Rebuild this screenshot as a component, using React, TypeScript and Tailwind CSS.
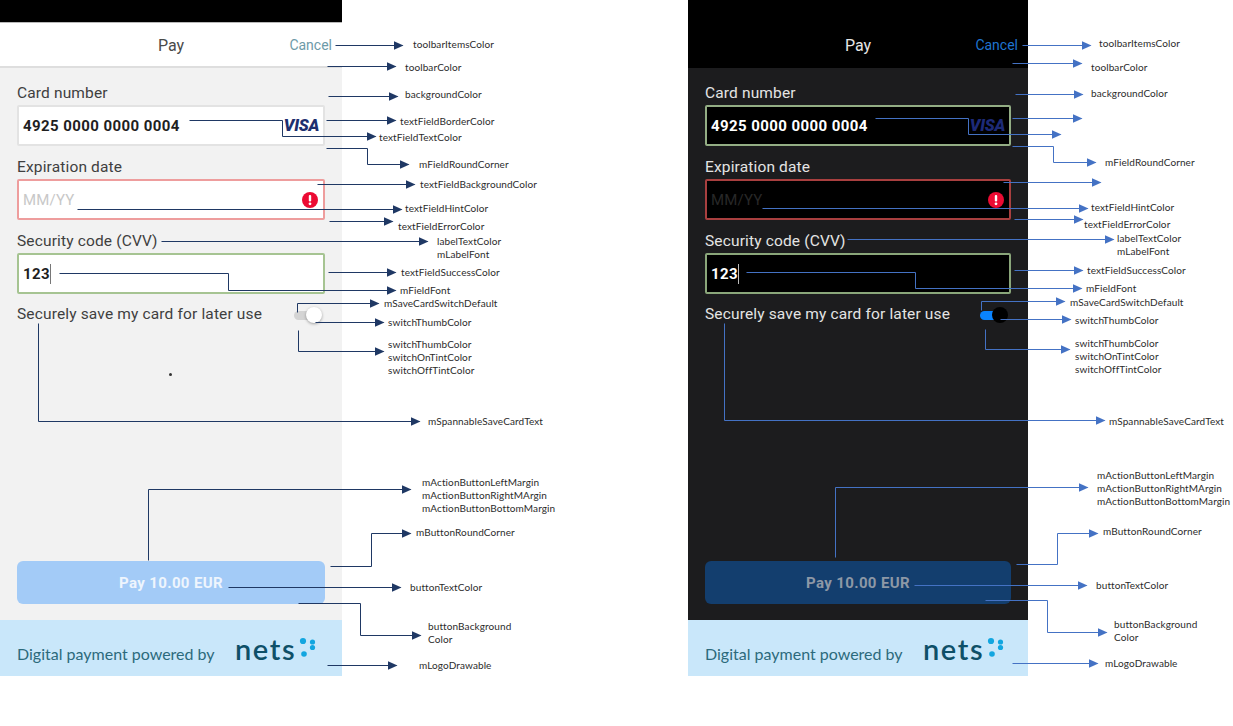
const light = {
  panel: 'w-[342px] bg-[#f2f2f2]',
  topBar: 'h-[23px] bg-black border-b border-[#b9b9b9]',
  header: 'h-[45px] bg-white border-b-2 border-[#dedede]',
  title: 'text-[#4a4a4a]',
  cancel: 'text-[#6d9aa8]',
  label: 'text-[#3f3f3f]',
  value: 'text-[#1f1f1f]',
  hint: 'text-[#c8c8c8]',
  field: 'bg-white',
  plain: 'border-[#e3e3e3]',
  error: 'border-[#ee9d9d]',
  success: 'border-[#a6c492]',
  caret: 'bg-[#777777]',
  visa: 'text-[#1d2f6f]',
  track: 'bg-[#d4d4d4]',
  thumb: 'bg-white shadow-[0_1px_3px_rgba(0,0,0,0.35)]',
  button: 'bg-[#a3cbf7]',
  buttonText: 'text-[#eef5fd]',
}

const dark = {
  panel: 'w-[340px] bg-[#1c1c1e]',
  topBar: 'h-[23px] bg-black',
  header: 'h-[45px] bg-black border-b-2 border-black',
  title: 'text-[#e6e6e6]',
  cancel: 'text-[#1f74d0]',
  label: 'text-[#e4e4e4]',
  value: 'text-white',
  hint: 'text-[#282828]',
  field: 'bg-black',
  plain: 'border-[#93ad84]',
  error: 'border-[#a83f3f]',
  success: 'border-[#8aa67a]',
  caret: 'bg-[#bbbbbb]',
  visa: 'text-[#1d2a78]',
  track: 'bg-[#0a84ff]',
  thumb: 'bg-black',
  button: 'bg-[#133e6e]',
  buttonText: 'text-[#8d98a6]',
}

type Theme = typeof light

const Field = ({ theme, label, border, children }: { theme: Theme; label: string; border: string; children: React.ReactNode }) => (
  <div>
    <div className={`h-5 text-[15.5px] leading-[20px] tracking-[0.15px] ${theme.label}`}>{label}</div>
    <div className={`mt-[2px] h-[41px] flex items-center justify-between pl-[4px] pr-[4px] border-2 rounded-[2px] ${theme.field} ${border}`}>
      {children}
    </div>
  </div>
)

const PayPanel = ({ theme, dot }: { theme: Theme; dot?: boolean }) => (
  <div className={`relative h-[676px] flex flex-col font-['Roboto',sans-serif] ${theme.panel}`}>
    <div className={theme.topBar} />
    <div className={`relative flex items-center justify-center pt-[2px] ${theme.header}`}>
      <span className={`text-[16px] ${theme.title}`}>Pay</span>
      <span className={`absolute right-[10px] text-[14px] ${theme.cancel}`}>Cancel</span>
    </div>
    <div className="flex-1 flex flex-col px-[17px] pt-[15px] pb-[16px]">
      <div className="flex flex-col gap-[11px]">
        <Field theme={theme} label="Card number" border={theme.plain}>
          <span className={`mt-[2px] text-[15px] font-bold tracking-[0.42px] ${theme.value}`}>4925 0000 0000 0004</span>
          <span className={`mt-[1px] text-[16.5px] font-black italic tracking-[-0.3px] ${theme.visa}`}>VISA</span>
        </Field>
        <Field theme={theme} label="Expiration date" border={theme.error}>
          <span className={`mt-[2px] text-[15px] tracking-[0.2px] ${theme.hint}`}>MM/YY</span>
          <svg width="16" height="16" viewBox="0 0 16 16" className="mr-[1px]">
            <circle cx="8" cy="8" r="8" fill="#ec0b33" />
            <rect x="6.8" y="3" width="2.4" height="6.4" rx="1" fill="#fff" />
            <circle cx="8" cy="11.8" r="1.4" fill="#fff" />
          </svg>
        </Field>
        <Field theme={theme} label="Security code (CVV)" border={theme.success}>
          <span className="flex items-center">
            <span className={`mt-[2px] text-[15px] font-bold tracking-[0.42px] ${theme.value}`}>123</span>
            <span className={`w-px h-[20px] ${theme.caret}`} />
          </span>
        </Field>
      </div>
      <div className="mt-[10px] h-5 flex items-center justify-between">
        <span className={`text-[15.5px] leading-[22px] tracking-[0.15px] ${theme.label}`}>Securely save my card for later use</span>
        <div className="relative mt-[1px] mr-[3px] w-[28px] h-[16px]">
          <div className={`absolute left-0 top-[4px] w-[20px] h-[9px] rounded-full ${theme.track}`} />
          <div className={`absolute left-[12px] top-0 w-[16px] h-[16px] rounded-full ${theme.thumb}`} />
        </div>
      </div>
      {dot && <div className="absolute left-[169px] top-[373px] w-[3px] h-[3px] rounded-full bg-[#333333]" />}
      <div className={`mt-auto h-[43px] rounded-[6px] flex items-center justify-center ${theme.button}`}>
        <span className={`mt-[2px] text-[15px] font-bold tracking-[0.35px] ${theme.buttonText}`}>Pay 10.00 EUR</span>
      </div>
    </div>
    <div className="h-[56px] bg-[#c9e7fa] flex items-center pl-[17px]">
      <span className="w-[218px] mt-[12px] text-[16px] text-[#2c6a7c] font-['Lato',sans-serif]">Digital payment powered by</span>
      <span className="mt-[1px] text-[29px] leading-none font-semibold tracking-[1.6px] text-[#0e5068] font-['Lato',sans-serif]">nets</span>
      <svg width="20" height="22" viewBox="0 0 20 22" className="ml-[2px] -mt-[2px]">
        <circle cx="5" cy="5" r="3.1" fill="#12a6e0" />
        <circle cx="14.5" cy="6" r="2.6" fill="#12a6e0" />
        <circle cx="14.5" cy="11.5" r="2.6" fill="#12a6e0" />
        <circle cx="6" cy="18" r="2.8" fill="#12a6e0" />
      </svg>
    </div>
  </div>
)

// connector lines of the two legends, page coordinates
const leftLines = [
  '335,45 402,45', '327,66 395,66', '328,96 397,96', '326,120 395,120',
  '189,120 282,120 282,136 375,136', '326,148 367,148 367,164 408,164',
  '317,184 414,184', '77,209 401,209', '329,221 392,221', '161,241 427,241',
  '328,272 395,272', '59,273 228,273 228,290 395,290', '297,312 297,303 378,303',
  '315,322 383,322', '298,330 298,351 383,351', '38,323 38,421 419,421',
  '148,560 148,489 410,489', '330,566 371,566 371,533 410,533', '228,587 400,587',
  '298,603 360,603 360,635 420,635', '327,665 396,665',
]

const rightLines = [
  '1022,45 1090,45', '1012,63 1081,63', '1015,94 1082,94', '1012,118 1081,118',
  '875,118 968,118 968,134 1060,134', '1012,146 1053,146 1053,162 1095,162',
  '1003,182 1100,182', '762,208 1087,208', '1014,219 1082,219', '847,239 1113,239',
  '1014,270 1082,270', '746,272 915,272 915,288 1081,288', '981,310 981,301 1064,301',
  '1000,319 1070,319', '985,329 985,349 1069,349', '724,323 724,420 1104,420',
  '835,557 835,487 1087,487', '1016,564 1057,564 1057,533 1097,533', '914,585 1086,585',
  '985,600 1047,600 1047,632 1106,632', '1012,663 1097,663',
]

const labels = [
  { at: 'left-[413px] top-[37px]', text: 'toolbarItemsColor' },
  { at: 'left-[405px] top-[60px]', text: 'toolbarColor' },
  { at: 'left-[405px] top-[87px]', text: 'backgroundColor' },
  { at: 'left-[400px] top-[114px]', text: 'textFieldBorderColor' },
  { at: 'left-[379px] top-[130px]', text: 'textFieldTextColor' },
  { at: 'left-[419px] top-[157px]', text: 'mFieldRoundCorner' },
  { at: 'left-[420px] top-[177px]', text: 'textFieldBackgroundColor' },
  { at: 'left-[405px] top-[201px]', text: 'textFieldHintColor' },
  { at: 'left-[398px] top-[219px]', text: 'textFieldErrorColor' },
  { at: 'left-[437px] top-[234px]', text: 'labelTextColor' },
  { at: 'left-[437px] top-[247px]', text: 'mLabelFont' },
  { at: 'left-[401px] top-[265px]', text: 'textFieldSuccessColor' },
  { at: 'left-[400px] top-[283px]', text: 'mFieldFont' },
  { at: 'left-[384px] top-[296px]', text: 'mSaveCardSwitchDefault' },
  { at: 'left-[388px] top-[315px]', text: 'switchThumbColor' },
  { at: 'left-[388px] top-[337px]', text: 'switchThumbColor' },
  { at: 'left-[388px] top-[350px]', text: 'switchOnTintColor' },
  { at: 'left-[388px] top-[363px]', text: 'switchOffTintColor' },
  { at: 'left-[428px] top-[414px]', text: 'mSpannableSaveCardText' },
  { at: 'left-[422px] top-[475px]', text: 'mActionButtonLeftMargin' },
  { at: 'left-[422px] top-[488px]', text: 'mActionButtonRightMArgin' },
  { at: 'left-[422px] top-[501px]', text: 'mActionButtonBottomMargin' },
  { at: 'left-[416px] top-[525px]', text: 'mButtonRoundCorner' },
  { at: 'left-[410px] top-[580px]', text: 'buttonTextColor' },
  { at: 'left-[428px] top-[619px]', text: 'buttonBackground' },
  { at: 'left-[428px] top-[632px]', text: 'Color' },
  { at: 'left-[419px] top-[658px]', text: 'mLogoDrawable' },
  { at: 'left-[1099px] top-[36px]', text: 'toolbarItemsColor' },
  { at: 'left-[1091px] top-[60px]', text: 'toolbarColor' },
  { at: 'left-[1091px] top-[86px]', text: 'backgroundColor' },
  { at: 'left-[1105px] top-[155px]', text: 'mFieldRoundCorner' },
  { at: 'left-[1091px] top-[200px]', text: 'textFieldHintColor' },
  { at: 'left-[1084px] top-[217px]', text: 'textFieldErrorColor' },
  { at: 'left-[1117px] top-[231px]', text: 'labelTextColor' },
  { at: 'left-[1117px] top-[244px]', text: 'mLabelFont' },
  { at: 'left-[1087px] top-[263px]', text: 'textFieldSuccessColor' },
  { at: 'left-[1086px] top-[281px]', text: 'mFieldFont' },
  { at: 'left-[1070px] top-[295px]', text: 'mSaveCardSwitchDefault' },
  { at: 'left-[1075px] top-[313px]', text: 'switchThumbColor' },
  { at: 'left-[1075px] top-[336px]', text: 'switchThumbColor' },
  { at: 'left-[1075px] top-[349px]', text: 'switchOnTintColor' },
  { at: 'left-[1075px] top-[362px]', text: 'switchOffTintColor' },
  { at: 'left-[1109px] top-[414px]', text: 'mSpannableSaveCardText' },
  { at: 'left-[1097px] top-[468px]', text: 'mActionButtonLeftMargin' },
  { at: 'left-[1097px] top-[481px]', text: 'mActionButtonRightMArgin' },
  { at: 'left-[1097px] top-[494px]', text: 'mActionButtonBottomMargin' },
  { at: 'left-[1103px] top-[524px]', text: 'mButtonRoundCorner' },
  { at: 'left-[1096px] top-[578px]', text: 'buttonTextColor' },
  { at: 'left-[1114px] top-[617px]', text: 'buttonBackground' },
  { at: 'left-[1114px] top-[630px]', text: 'Color' },
  { at: 'left-[1105px] top-[656px]', text: 'mLogoDrawable' },
]

const Legend = () => (
  <>
    <svg width="1233" height="726" className="absolute inset-0 pointer-events-none">
      <defs>
        <marker id="head-left" markerUnits="userSpaceOnUse" markerWidth="10" markerHeight="9" refX="9" refY="4.5" orient="auto">
          <path d="M0 0 L10 4.5 L0 9 Z" fill="#1f3864" />
        </marker>
        <marker id="head-right" markerUnits="userSpaceOnUse" markerWidth="10" markerHeight="9" refX="9" refY="4.5" orient="auto">
          <path d="M0 0 L10 4.5 L0 9 Z" fill="#4472c4" />
        </marker>
      </defs>
      <g transform="translate(0.5 0.5)">
        {leftLines.map((points) => (
          <polyline key={points} points={points} fill="none" stroke="#1f3864" markerEnd="url(#head-left)" />
        ))}
        {rightLines.map((points) => (
          <polyline key={points} points={points} fill="none" stroke="#4472c4" markerEnd="url(#head-right)" />
        ))}
      </g>
    </svg>
    {labels.map((item) => (
      <div key={item.at} className={`absolute whitespace-nowrap text-[10px] leading-[14px] tracking-[0.1px] text-[#2b2b2b] font-['Lato',sans-serif] ${item.at}`}>
        {item.text}
      </div>
    ))}
  </>
)

export default function App() {
  return (
    <div className="relative w-[1233px] h-[726px] bg-white overflow-hidden flex items-start">
      <PayPanel theme={light} dot />
      <div className="w-[346px]" />
      <PayPanel theme={dark} />
      <Legend />
    </div>
  )
}
